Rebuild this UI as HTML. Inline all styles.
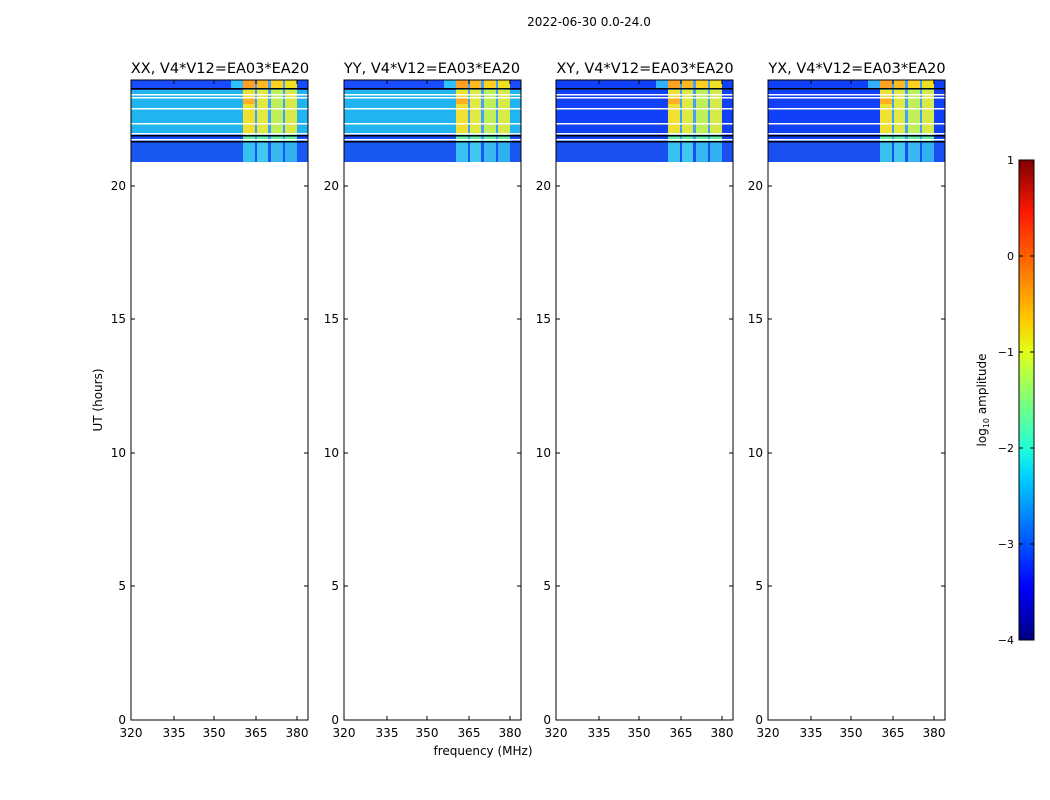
<!DOCTYPE html>
<html><head><meta charset="utf-8"><style>
body{margin:0;background:#fff;width:1050px;height:800px;overflow:hidden}
svg{display:block;font-family:"DejaVu Sans","Liberation Sans",sans-serif}
</style></head><body>
<svg width="1050" height="800" viewBox="0 0 1050 800">
<defs>
<linearGradient id="jet" x1="0" y1="1" x2="0" y2="0">
<stop offset="0" stop-color="#000080"/><stop offset="0.11" stop-color="#0000ff"/>
<stop offset="0.34" stop-color="#00d0ff"/><stop offset="0.4" stop-color="#20ffd8"/>
<stop offset="0.6" stop-color="#e0ff18"/><stop offset="0.66" stop-color="#ffd000"/>
<stop offset="0.89" stop-color="#ff1800"/><stop offset="1" stop-color="#800000"/>
</linearGradient>
<g id="dA">
<rect x="0" y="0" width="177" height="82" fill="#1a4cff"/>
<rect x="0" y="10" width="177" height="44" fill="#20b4f0"/>
<rect x="0" y="62" width="177" height="20" fill="#1a58f4"/>
<rect x="100" y="0" width="12" height="8" fill="#30c0ff"/>
</g>
<g id="dB">
<rect x="0" y="0" width="177" height="82" fill="#1040f8"/>
<rect x="0" y="62" width="177" height="20" fill="#1a50f0"/>
<rect x="100" y="0" width="12" height="8" fill="#30b0ff"/>
</g>
<g id="cols">
<rect x="112" y="0" width="54" height="62" fill="#60f0a0"/>
<rect x="112" y="0" width="12" height="8" fill="#ffa020"/><rect x="126" y="0" width="11" height="8" fill="#ffb820"/>
<rect x="140" y="0" width="12" height="8" fill="#ffd020"/><rect x="154" y="0" width="12" height="8" fill="#f0e020"/>
<rect x="112" y="10" width="12" height="44" fill="#f0e030"/><rect x="126" y="10" width="11" height="44" fill="#e0ea40"/>
<rect x="140" y="10" width="12" height="44" fill="#c0f058"/><rect x="154" y="10" width="12" height="44" fill="#d8ea48"/>
<rect x="112" y="18" width="12" height="6" fill="#ffb020"/>
<rect x="124" y="0" width="2" height="62" fill="#40a0ff"/><rect x="137" y="0" width="3" height="62" fill="#40a0ff"/>
<rect x="152" y="0" width="2" height="62" fill="#40a0ff"/>
<rect x="112" y="62" width="12" height="20" fill="#38c0f0"/><rect x="126" y="62" width="11" height="20" fill="#40c8f0"/>
<rect x="140" y="62" width="12" height="20" fill="#38b8f0"/><rect x="154" y="62" width="12" height="20" fill="#30b0f0"/>
</g>
<g id="lines">
<rect x="0" y="8" width="177" height="1.5" fill="#000"/>
<rect x="0" y="14" width="177" height="1.5" fill="#fff"/>
<rect x="0" y="17" width="177" height="1.5" fill="#fff"/>
<rect x="0" y="28" width="177" height="1.5" fill="#fff"/>
<rect x="0" y="43" width="177" height="1.5" fill="#fff"/>
<rect x="0" y="53" width="177" height="1.5" fill="#fff"/>
<rect x="0" y="55" width="177" height="1.5" fill="#000"/>
<rect x="0" y="59" width="177" height="1.5" fill="#fff"/>
<rect x="0" y="61" width="177" height="1.5" fill="#000"/>
</g>
<g id="ax">
<rect x="0" y="0" width="177" height="640" fill="none" stroke="#000" stroke-width="1"/>
<g stroke="#000" stroke-width="1">
<path d="M0 640h4M0 506h4M0 373h4M0 239h4M0 106h4M177 640h-4M177 506h-4M177 373h-4M177 239h-4M177 106h-4"/>
<path d="M0 640v-4M43 640v-4M83 640v-4M125 640v-4M166 640v-4M0 0v4M43 0v4M83 0v4M125 0v4M166 0v4"/>
</g>
<g font-size="12" text-anchor="middle" fill="#000">
<text x="0" y="657">320</text><text x="43" y="657">335</text><text x="83" y="657">350</text><text x="125" y="657">365</text><text x="166" y="657">380</text>
</g>
<g font-size="12" text-anchor="end" fill="#000">
<text x="-5" y="644">0</text><text x="-5" y="510">5</text><text x="-5" y="377">10</text><text x="-5" y="243">15</text><text x="-5" y="110">20</text>
</g>
</g>
</defs>
<text x="589" y="26" font-size="12" text-anchor="middle">2022-06-30 0.0-24.0</text>
<g transform="translate(131,80)"><use href="#dA"/><use href="#cols"/><use href="#lines"/><use href="#ax"/></g>
<g transform="translate(344,80)"><use href="#dA"/><use href="#cols"/><use href="#lines"/><use href="#ax"/></g>
<g transform="translate(556,80)"><use href="#dB"/><use href="#cols"/><use href="#lines"/><use href="#ax"/></g>
<g transform="translate(768,80)"><use href="#dB"/><use href="#cols"/><use href="#lines"/><use href="#ax"/></g>
<g font-size="14.5" text-anchor="middle">
<text x="220" y="73">XX, V4*V12=EA03*EA20</text>
<text x="432" y="73">YY, V4*V12=EA03*EA20</text>
<text x="645" y="73">XY, V4*V12=EA03*EA20</text>
<text x="857" y="73">YX, V4*V12=EA03*EA20</text>
</g>
<text x="483" y="755" font-size="12" text-anchor="middle">frequency (MHz)</text>
<text transform="translate(102,400) rotate(-90)" font-size="12" text-anchor="middle">UT (hours)</text>
<rect x="1019" y="160" width="15" height="480" fill="url(#jet)" stroke="#000" stroke-width="1"/>
<g stroke="#000"><path d="M1019 256h4M1019 352h4M1019 448h4M1019 544h4M1034 256h-4M1034 352h-4M1034 448h-4M1034 544h-4"/></g>
<g font-size="11" text-anchor="end">
<text x="1014" y="164">1</text><text x="1014" y="260">0</text><text x="1014" y="356">−1</text><text x="1014" y="452">−2</text><text x="1014" y="548">−3</text><text x="1014" y="644">−4</text>
</g>
<text transform="translate(986,400) rotate(-90)" font-size="12" text-anchor="middle">log<tspan font-size="8" dy="3">10</tspan><tspan dy="-3"> amplitude</tspan></text>
</svg>
</body></html>
